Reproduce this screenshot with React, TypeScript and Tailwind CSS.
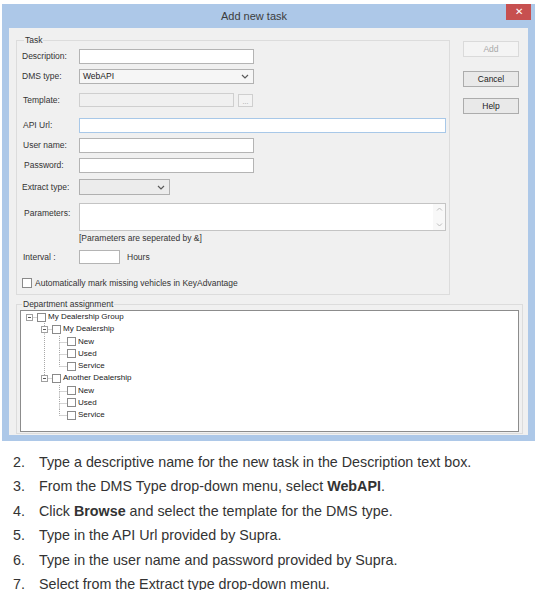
import React from "react";

type TreeNode = { label: string; children?: TreeNode[] };

const tree: TreeNode[] = [
  {
    label: "My Dealership Group",
    children: [
      { label: "My Dealership", children: [{ label: "New" }, { label: "Used" }, { label: "Service" }] },
      { label: "Another Dealership", children: [{ label: "New" }, { label: "Used" }, { label: "Service" }] },
    ],
  },
];

type Row = {
  label: string;
  depth: number;
  hasChildren: boolean;
  isLast: boolean;
  hasPrev: boolean;
  through: boolean[]; // does the ancestor at each depth still have siblings below
};

function flatten(nodes: TreeNode[], depth: number, through: boolean[], out: Row[]) {
  nodes.forEach((n, i) => {
    const isLast = i === nodes.length - 1;
    out.push({ label: n.label, depth, hasChildren: !!n.children, isLast, hasPrev: i > 0, through });
    if (n.children) flatten(n.children, depth + 1, [...through, !isLast && depth > 0], out);
  });
  return out;
}

const rows = flatten(tree, 0, [], []);

const H = 12.25;

function Connector({ row, col }: { row: Row; col: number }) {
  const cx = 7.5;
  const cy = 6.5;
  const dash = { stroke: "#a8a8a8", strokeWidth: 1, strokeDasharray: "1 1" };
  if (col < row.depth) {
    return (
      <svg width="15" height={H} className="shrink-0">
        {row.through[col] && <line x1={cx} y1={0} x2={cx} y2={H} {...dash} />}
      </svg>
    );
  }
  const up = row.depth > 0 || row.hasPrev;
  const down = !row.isLast && row.depth > 0;
  return (
    <svg width="15" height={H} className="shrink-0">
      {up && <line x1={cx} y1={0} x2={cx} y2={cy} {...dash} />}
      {down && <line x1={cx} y1={cy} x2={cx} y2={H} {...dash} />}
      <line x1={cx} y1={cy} x2={15} y2={cy} {...dash} />
      {row.hasChildren && (
        <>
          <rect x={4.5} y={3.5} width={6} height={6} fill="#fff" stroke="#a0a0a0" />
          <line x1={6} y1={cy} x2={9} y2={cy} stroke="#555" strokeWidth={1} />
        </>
      )}
    </svg>
  );
}

function Chevron() {
  return (
    <svg width="8" height="5" viewBox="0 0 8 5" className="shrink-0">
      <path d="M1 1l3 3 3-3" fill="none" stroke="#5a5a5a" strokeWidth="1.2" />
    </svg>
  );
}

function Label({ text, className = "" }: { text: string; className?: string }) {
  return <div className={`w-[57px] shrink-0 text-[8.5px] text-[#333] ${className}`}>{text}</div>;
}

const steps: React.ReactNode[] = [
  "Type a descriptive name for the new task in the Description text box.",
  <>
    From the DMS Type drop-down menu, select <b>WebAPI</b>.
  </>,
  <>
    Click <b>Browse</b> and select the template for the DMS type.
  </>,
  "Type in the API Url provided by Supra.",
  "Type in the user name and password provided by Supra.",
  "Select from the Extract type drop-down menu.",
];

export default function App() {
  return (
    <div className="w-[548px] h-[590px] bg-white overflow-hidden font-['Liberation_Sans',Arial,sans-serif]">
      {/* Dialog window */}
      <div className="ml-[2px] mt-[4px] w-[533px] h-[437px] bg-[#adc8e8] flex flex-col">
        {/* Title bar */}
        <div className="h-[24px] flex shrink-0">
          <div className="flex-1 text-center text-[11px] leading-[24px] text-[#3c3c3c]">Add new task</div>
          <div className="w-[25px] h-[16px] bg-[#c75050] mr-[4px] flex items-center justify-center text-white text-[10px] leading-none">
            ✕
          </div>
        </div>

        {/* Client area */}
        <div className="mx-[7px] mb-[6px] flex-1 bg-[#f0f0f0] pl-[7px] pt-[12px]">
          <div className="flex">
            {/* Task group */}
            <div className="relative w-[434px] h-[255px] border border-[#dcdcdc] pl-[5px]">
              <span className="absolute left-[7px] -top-[6px] px-[1px] bg-[#f0f0f0] text-[8.5px] leading-[10px] text-[#333]">
                Task
              </span>

              <div className="mt-[8px] h-[15px] flex items-center">
                <Label text="Description:" />
                <div className="w-[175px] h-full bg-white border border-[#b4b4b4]" />
              </div>

              <div className="mt-[5px] h-[15px] flex items-center">
                <Label text="DMS type:" />
                <div className="w-[175px] h-full bg-[#f6f6f6] border border-[#b2b2b2] flex items-center pl-[3px] pr-[4px]">
                  <span className="flex-1 text-[8.5px] text-[#222]">WebAPI</span>
                  <Chevron />
                </div>
              </div>

              <div className="mt-[9px] h-[14px] flex items-center">
                <Label text="Template:" className="pl-[1px]" />
                <div className="w-[155px] h-full bg-[#f0f0f0] border border-[#cfcfcf]" />
                <div className="ml-[4px] w-[15px] h-[13px] bg-[#f3f3f3] border border-[#cfcfcf] flex items-end justify-center text-[7px] leading-[9px] text-[#9a9a9a]">
                  ...
                </div>
              </div>

              <div className="mt-[11px] h-[15px] flex items-center">
                <Label text="API Url:" className="pl-[1px]" />
                <div className="w-[367px] h-full bg-white border border-[#a8c8e8]" />
              </div>

              <div className="mt-[5px] h-[15px] flex items-center">
                <Label text="User name:" className="pl-[1px]" />
                <div className="w-[175px] h-full bg-white border border-[#b4b4b4]" />
              </div>

              <div className="mt-[5px] h-[15px] flex items-center">
                <Label text="Password:" className="pl-[2px]" />
                <div className="w-[175px] h-full bg-white border border-[#b4b4b4]" />
              </div>

              <div className="mt-[6px] h-[16px] flex items-center">
                <Label text="Extract type:" />
                <div className="w-[91px] h-full bg-[#ececec] border border-[#b0b0b0] flex items-center justify-end pr-[4px]">
                  <Chevron />
                </div>
              </div>

              <div className="mt-[8px] h-[28px] flex items-start">
                <Label text="Parameters:" className="pl-[2px] pt-[4px]" />
                <div className="w-[367px] h-full bg-white border border-[#c4c4c4] flex justify-end">
                  <div className="w-[12px] h-full bg-[#f8f8f8] flex flex-col items-center justify-between py-[3px]">
                    <svg width="7" height="4" viewBox="0 0 7 4">
                      <path d="M1 3.5l2.5-2.5 2.5 2.5" fill="none" stroke="#bdbdbd" />
                    </svg>
                    <svg width="7" height="4" viewBox="0 0 7 4">
                      <path d="M1 0.5l2.5 2.5 2.5-2.5" fill="none" stroke="#bdbdbd" />
                    </svg>
                  </div>
                </div>
              </div>

              <div className="mt-[2px] h-[10px] pl-[57px] text-[8.5px] leading-[10px] text-[#333]">
                [Parameters are seperated by &amp;]
              </div>

              <div className="mt-[7px] h-[14px] flex items-center">
                <Label text="Interval :" className="pl-[1px]" />
                <div className="w-[41px] h-full bg-white border border-[#b4b4b4]" />
                <span className="ml-[7px] text-[8.5px] text-[#333]">Hours</span>
              </div>

              <div className="mt-[13px] h-[12px] flex items-center">
                <div className="w-[10px] h-[10px] bg-white border border-[#8a8a8a]" />
                <span className="ml-[3px] text-[8.5px] text-[#333]">
                  Automatically mark missing vehicles in KeyAdvantage
                </span>
              </div>
            </div>

            {/* Buttons */}
            <div className="ml-[13px] mt-[1px] w-[56px] flex flex-col text-[8.5px]">
              <div className="h-[16px] bg-[#f4f4f4] border border-[#dadada] text-[#a8a8a8] flex items-center justify-center">
                Add
              </div>
              <div className="mt-[14px] h-[16px] bg-[#e9e9e9] border border-[#acacac] text-[#222] flex items-center justify-center">
                Cancel
              </div>
              <div className="mt-[11px] h-[16px] bg-[#e9e9e9] border border-[#acacac] text-[#222] flex items-center justify-center">
                Help
              </div>
            </div>
          </div>

          {/* Department assignment */}
          <div className="relative mt-[9px] w-[507px] h-[130px] border border-[#dcdcdc] pl-[3px] pt-[5px]">
            <span className="absolute left-[5px] -top-[6px] px-[1px] bg-[#f0f0f0] text-[8.5px] leading-[10px] text-[#333]">
              Department assignment
            </span>
            <div className="w-[499px] h-[122px] bg-white border border-[#8c8c8c] pl-[1px]">
              {rows.map((row, i) => (
                <div key={i} className="flex items-center" style={{ height: H }}>
                  {Array.from({ length: row.depth + 1 }).map((_, c) => (
                    <Connector key={c} row={row} col={c} />
                  ))}
                  <div className="w-[9px] h-[9px] shrink-0 bg-white border border-[#8a8a8a]" />
                  <span className="ml-[2px] text-[8px] leading-none text-[#222] whitespace-nowrap">{row.label}</span>
                </div>
              ))}
            </div>
          </div>
        </div>
      </div>

      {/* Steps */}
      <div className="mt-[9px] pl-[13px] text-[14.3px] leading-[24.4px] text-[#333]">
        {steps.map((s, i) => (
          <div key={i} className="flex">
            <span className="w-[26px] shrink-0">{i + 2}.</span>
            <span>{s}</span>
          </div>
        ))}
      </div>
    </div>
  );
}
